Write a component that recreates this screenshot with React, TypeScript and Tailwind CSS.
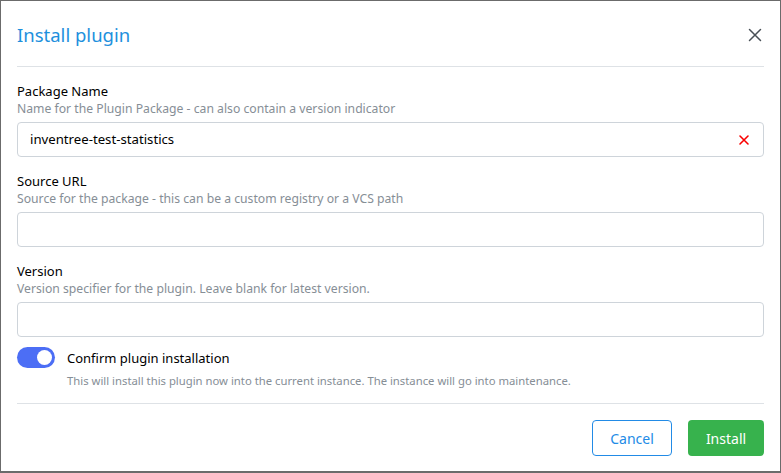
import React from "react";

function Field({ label, desc, value, clear }: { label: string; desc: string; value?: string; clear?: boolean }) {
  return (
    <div className="flex flex-col">
      <div className="text-[13px] leading-[20px] text-black">{label}</div>
      <div className="text-[12.2px] leading-[16px] text-[#868e96] mb-[5px]">{desc}</div>
      <div className="h-[35px] border border-[#ced4da] rounded-[4px] flex items-center pl-[12px] pr-[12px]">
        <span className="flex-1 text-[13.2px] text-black">{value}</span>
        {clear && (
          <svg width="12" height="12" viewBox="0 0 12 12" className="mr-[1px]">
            <path d="M2 2 L10 10 M10 2 L2 10" stroke="#fa0000" strokeWidth="1.6" strokeLinecap="round" />
          </svg>
        )}
      </div>
    </div>
  );
}

export default function App() {
  return (
    <div
      className="w-[781px] h-[473px] bg-white border border-[#6b6b6b] border-b-2 box-border flex flex-col px-[16px]"
      style={{ fontFamily: '"Noto Sans", "Open Sans", sans-serif' }}
    >
      <div className="h-[65px] flex items-center justify-between pt-[3px]">
        <div className="text-[18.5px] text-[#1e90dd]">Install plugin</div>
        <svg width="14" height="14" viewBox="0 0 14 14" className="mr-[2px]">
          <path d="M1.5 1.5 L12.5 12.5 M12.5 1.5 L1.5 12.5" stroke="#495057" strokeWidth="1.5" strokeLinecap="round" />
        </svg>
      </div>
      <div className="h-px bg-[#dee2e6]" />
      <div className="flex flex-col gap-[14px] pt-[14px]">
        <Field
          label="Package Name"
          desc="Name for the Plugin Package - can also contain a version indicator"
          value="inventree-test-statistics"
          clear
        />
        <Field label="Source URL" desc="Source for the package - this can be a custom registry or a VCS path" />
        <Field label="Version" desc="Version specifier for the plugin. Leave blank for latest version." />
      </div>
      <div className="flex pt-[10px]">
        <div className="w-[38px] h-[21px] rounded-full bg-[#4c6ef5] relative shrink-0">
          <div className="absolute right-[3px] top-[3px] w-[15px] h-[15px] rounded-full bg-white" />
        </div>
        <div className="ml-[12px] flex flex-col pt-[1px]">
          <div className="text-[13px] leading-[20px] text-black">Confirm plugin installation</div>
          <div className="text-[11.3px] leading-[16px] text-[#868e96] mt-[5px]">
            This will install this plugin now into the current instance. The instance will go into maintenance.
          </div>
        </div>
      </div>
      <div className="h-px bg-[#dee2e6] mt-[14px]" />
      <div className="flex justify-end gap-[16px] pt-[16px]">
        <button className="w-[80px] h-[36px] border border-[#228be6] rounded-[4px] text-[14px] text-[#228be6] bg-white">
          Cancel
        </button>
        <button className="w-[76px] h-[36px] rounded-[4px] text-[14px] text-white bg-[#37b24d]">Install</button>
      </div>
    </div>
  );
}
